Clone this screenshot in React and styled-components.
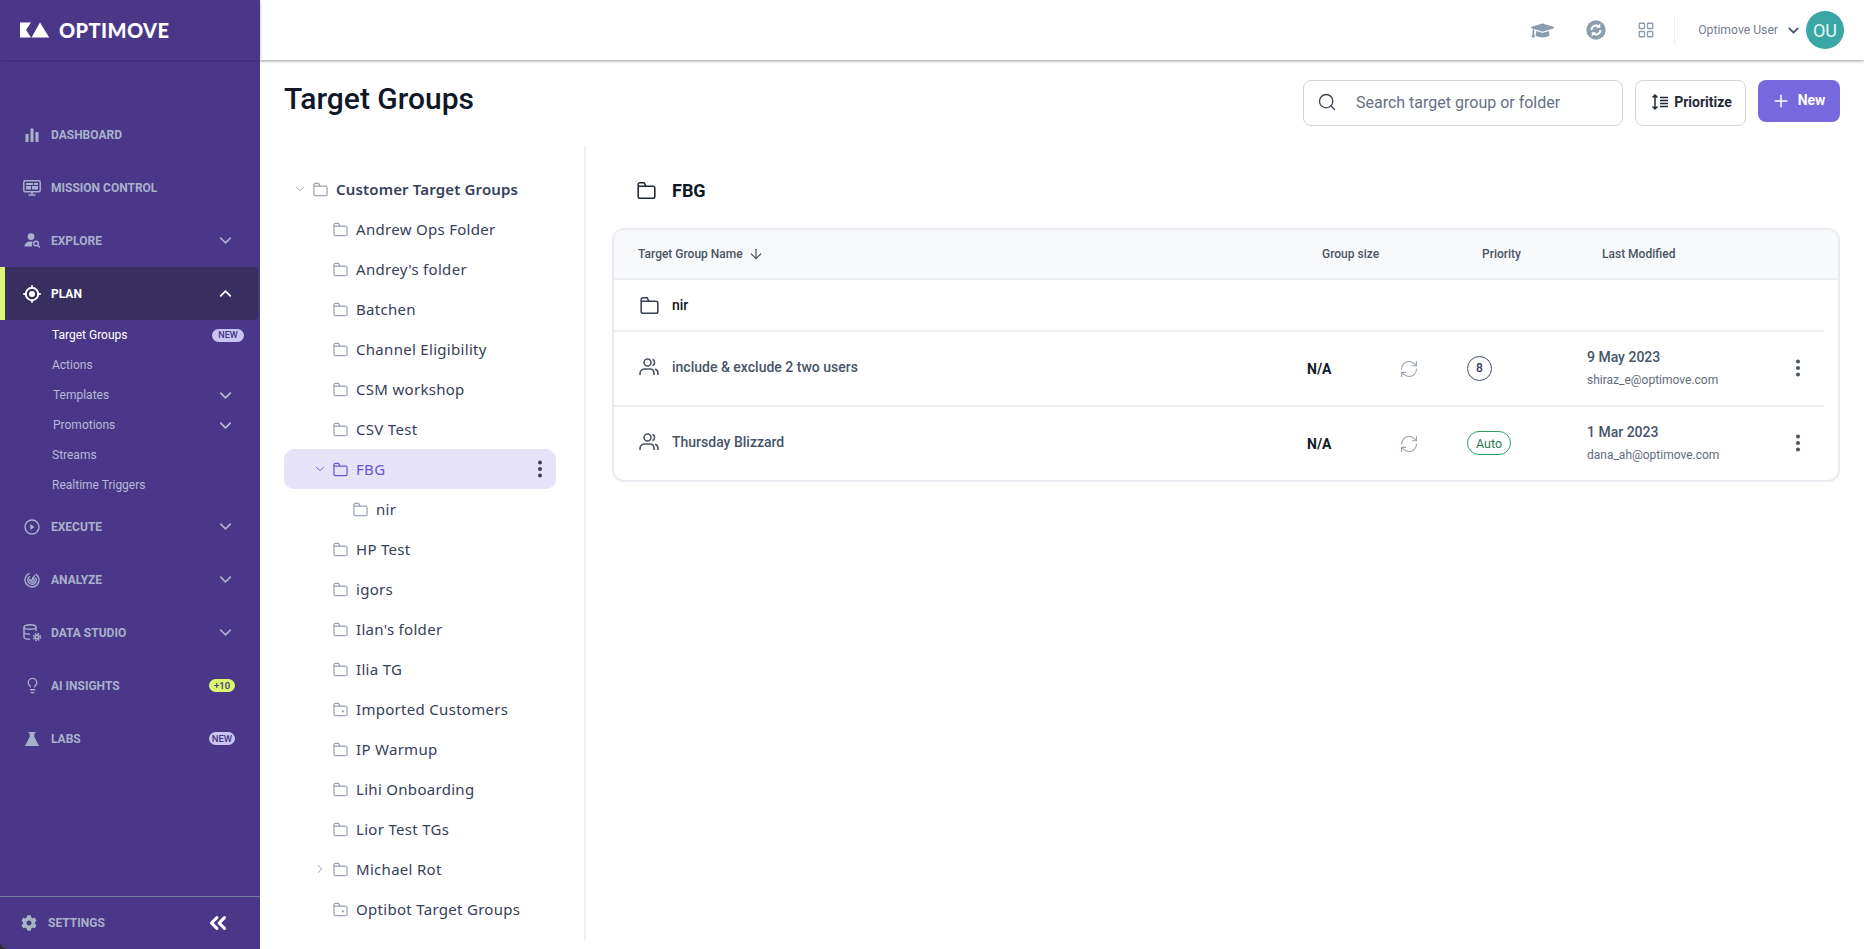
import React from 'react';
import styled, { createGlobalStyle } from 'styled-components';
import { ChevronDown, ChevronUp, ChevronRight, ChevronsLeft, Lightbulb, LayoutGrid, Search, Plus, ArrowDown, RefreshCw } from 'lucide-react';
import { FaCog, FaGraduationCap } from 'react-icons/fa';

const Global = createGlobalStyle`
	html, body { margin: 0; padding: 0; background: #fff; }
	body { font-family: Roboto, "Liberation Sans", sans-serif; }
	* { box-sizing: border-box; }
`;

// sidebar icons, drawn because the packages have nothing close enough
const BarsIcon = () => (
	<svg width="14" height="14" viewBox="0 0 14 14" fill="currentColor">
		<rect x="0.5" y="6" width="3" height="8" />
		<rect x="5.5" y="0.5" width="3" height="13.5" />
		<rect x="10.5" y="4" width="3" height="10" />
	</svg>
);
const MonitorIcon = () => (
	<svg width="18" height="16" viewBox="0 0 18 16" fill="none" stroke="currentColor">
		<rect x="0.75" y="0.75" width="16.5" height="11" rx="1.5" strokeWidth="1.5" />
		<rect x="3" y="3" width="7" height="2" fill="currentColor" stroke="none" />
		<rect x="11" y="3" width="4" height="2" fill="currentColor" stroke="none" />
		<rect x="3" y="6" width="5" height="3.5" fill="currentColor" stroke="none" />
		<rect x="9" y="6" width="6" height="3.5" fill="currentColor" stroke="none" />
		<path d="M9 12v2M5.5 15h7" strokeWidth="1.6" />
	</svg>
);
const ExploreIcon = () => (
	<svg width="17" height="15" viewBox="0 0 17 15" fill="currentColor">
		<circle cx="7" cy="3.6" r="3.4" />
		<path d="M0.5 13.5c0-3 2.5-5 6-5 1 0 1.7.1 2.3.4a4.2 4.2 0 0 0-.6 4.6z" />
		<circle cx="12" cy="10.5" r="2.3" fill="none" stroke="currentColor" strokeWidth="1.4" />
		<path d="M13.7 12.2l2.2 2.2" stroke="currentColor" strokeWidth="1.4" />
	</svg>
);
const TargetIcon = () => (
	<svg width="18" height="18" viewBox="0 0 18 18" fill="none" stroke="currentColor">
		<circle cx="9" cy="9" r="6.2" strokeWidth="2" />
		<circle cx="9" cy="9" r="3" fill="currentColor" stroke="none" />
		<path d="M9 0.3v2.700M9 15v2.700M0.3 9H3M15 9h2.700" strokeWidth="1.800" />
	</svg>
);
const PlayIcon = () => (
	<svg width="16" height="16" viewBox="0 0 16 16" fill="none" stroke="currentColor">
		<circle cx="8" cy="8" r="7" strokeWidth="1.4" />
		<path d="M6.3 5l4.2 3-4.2 3z" fill="currentColor" stroke="none" />
	</svg>
);
const RadarIcon = () => (
	<svg width="16" height="16" viewBox="0 0 16 16" fill="none" stroke="currentColor" strokeWidth="1.4">
		<path d="M5.6 1.4a7 7 0 1 0 6.2.7" />
		<path d="M6 4.4a4.2 4.2 0 1 0 5.4 1.2" />
		<path d="M8 5.8a2.2 2.2 0 1 1-2.2 2.2L8 8l3-5" />
	</svg>
);
const DataIcon = () => (
	<svg width="19" height="18" viewBox="0 0 19 18" fill="none" stroke="currentColor" strokeWidth="1.4">
		<ellipse cx="7" cy="3" rx="6" ry="2.3" />
		<path d="M1 3v10c0 1.3 2.7 2.3 6 2.3M13 3v4M1 8c0 1.3 2.7 2.3 6 2.3" />
		<circle cx="14" cy="13" r="2.6" fill="currentColor" stroke="none" />
		<circle cx="14" cy="13" r="3.4" strokeDasharray="1.5 1.2" strokeWidth="1.6" />
		<circle cx="14" cy="13" r="0.9" fill="#4b3788" stroke="none" />
	</svg>
);
const FlaskIcon = () => (
	<svg width="14" height="14" viewBox="0 0 14 14" fill="currentColor">
		<path d="M3.5 0h7v1.3H9.3v3.4L14 14H0L4.700 4.700V1.300H3.500z" />
	</svg>
);
const LogoMark = () => (
	<svg width="30" height="16" viewBox="0 0 30 16" fill="#fff">
		<path d="M0 .5h11L6 8l5 7.500H0z" />
		<path d="M20 .5L29.200 15.500H11.500z" />
	</svg>
);

// tree and table icons
const FolderIcon = ({ size = 14, star }) => (
	<svg width={size} height={size} viewBox="0 0 16 16" fill="none" stroke="currentColor" strokeWidth="1.300">
		<path d="M1 3.500V13a1.500 1.500 0 0 0 1.500 1.500h11A1.500 1.500 0 0 0 15 13V6a1.500 1.500 0 0 0-1.500-1.500H1" />
		<path d="M1 4V3a1.500 1.500 0 0 1 1.500-1.500H6L7.500 4.500" />
		{star && <circle cx="10.500" cy="10" r="1.200" fill="currentColor" stroke="none" />}
	</svg>
);
const UsersIcon = () => (
	<svg width="20" height="18" viewBox="0 0 20 18" fill="none" stroke="#4a5468" strokeWidth="1.600">
		<circle cx="8.500" cy="4.500" r="3.500" />
		<path d="M13.500 1.300a3.500 3.500 0 0 1 0 6.400" />
		<path d="M1 17v-1.500C1 12.500 3.500 11 6 11h5c2.500 0 4 1.500 4 4.500V17" />
		<path d="M16 11.200c1.800.4 3 1.900 3 4.300V17" />
	</svg>
);
const KebabIcon = ({ color = '#4a5468' }) => (
	<svg width="4" height="18" viewBox="0 0 4 18" fill={color}>
		<circle cx="2" cy="2.500" r="2" />
		<circle cx="2" cy="9" r="2" />
		<circle cx="2" cy="15.500" r="2" />
	</svg>
);
const SyncBadgeIcon = () => (
	<svg width="20" height="20" viewBox="0 0 20 20">
		<circle cx="10" cy="10" r="9.700" fill="#8b9dae" />
		<path d="M5.500 10a4.500 4.500 0 0 1 7.500-3.300M14.500 10a4.500 4.500 0 0 1-7.500 3.300" fill="none" stroke="#fff" strokeWidth="2" />
		<path d="M14.300 3.500v4.300H10zM5.700 16.500v-4.300H10z" fill="#fff" />
	</svg>
);
const SortLinesIcon = () => (
	<svg width="18" height="18" viewBox="0 0 18 18" fill="none" stroke="#1f2937" strokeWidth="1.500">
		<path d="M4 2v14M1.500 4.500L4 2l2.500 2.500M1.500 13.500L4 16l2.500-2.500" />
		<path d="M9 4.500h8M9 7.500h8M9 10.500h8M9 13.500h8" />
	</svg>
);

const navTop = [
	{ label: 'Dashboard', icon: <BarsIcon /> },
	{ label: 'Mission Control', icon: <MonitorIcon /> },
	{ label: 'Explore', icon: <ExploreIcon />, more: true },
];
const subItems = [
	{ label: 'Target Groups', active: true, badge: 'NEW' },
	{ label: 'Actions' },
	{ label: 'Templates', more: true, nudge: 1 },
	{ label: 'Promotions', more: true, nudge: 1 },
	{ label: 'Streams' },
	{ label: 'Realtime Triggers' },
];
const navBottom = [
	{ label: 'Execute', icon: <PlayIcon />, more: true },
	{ label: 'Analyze', icon: <RadarIcon />, more: true },
	{ label: 'Data Studio', icon: <DataIcon />, more: true },
	{ label: 'AI Insights', icon: <Lightbulb size={17} strokeWidth={1.8} />, pill: '+10', lime: true },
	{ label: 'Labs', icon: <FlaskIcon />, pill: 'NEW' },
];
const tree = [
	{ name: 'Customer Target Groups', depth: 0, root: true, open: true },
	{ name: 'Andrew Ops Folder', depth: 1 },
	{ name: "Andrey's folder", depth: 1 },
	{ name: 'Batchen', depth: 1 },
	{ name: 'Channel Eligibility', depth: 1 },
	{ name: 'CSM workshop', depth: 1 },
	{ name: 'CSV Test', depth: 1 },
	{ name: 'FBG', depth: 1, open: true, selected: true },
	{ name: 'nir', depth: 2 },
	{ name: 'HP Test', depth: 1 },
	{ name: 'igors', depth: 1 },
	{ name: "Ilan's folder", depth: 1 },
	{ name: 'Ilia TG', depth: 1 },
	{ name: 'Imported Customers', depth: 1, star: true },
	{ name: 'IP Warmup', depth: 1 },
	{ name: 'Lihi Onboarding', depth: 1 },
	{ name: 'Lior Test TGs', depth: 1 },
	{ name: 'Michael Rot', depth: 1, closed: true },
	{ name: 'Optibot Target Groups', depth: 1, star: true },
];
const groups = [
	{ name: 'include & exclude 2 two users', date: '9 May 2023', by: 'shiraz_e@optimove.com', priority: '8' },
	{ name: 'Thursday Blizzard', date: '1 Mar 2023', by: 'dana_ah@optimove.com', priority: 'Auto' },
];

const App = () => {
	return (
		<Shell>
			<Global />
			<SideRail>
				<Sidebar>
					<Brand>
						<LogoMark />
						<BrandName>OPTIMOVE</BrandName>
					</Brand>
					<Nav>
						{navTop.map((item) => <NavEntry key={item.label} item={item} />)}
						<NavItem $current>
							<NavIcon><TargetIcon /></NavIcon>
							<NavLabel>Plan</NavLabel>
							<NavChevron><ChevronUp size={19} strokeWidth={2.2} /></NavChevron>
						</NavItem>
						<SubList>
							{subItems.map((sub) => (
								<SubItem key={sub.label} $active={sub.active} $nudge={sub.nudge}>
									<span>{sub.label}</span>
									{sub.more && <NavChevron><ChevronDown size={19} strokeWidth={2.2} /></NavChevron>}
									{sub.badge && <SubBadge>{sub.badge}</SubBadge>}
								</SubItem>
							))}
						</SubList>
						{navBottom.map((item) => <NavEntry key={item.label} item={item} />)}
					</Nav>
					<SideFooter>
						<SettingsIcon><FaCog size={16} /></SettingsIcon>
						<SettingsLabel>Settings</SettingsLabel>
						<Collapse><ChevronsLeft size={26} strokeWidth={2.8} /></Collapse>
					</SideFooter>
				</Sidebar>
			</SideRail>
			<Main>
				<TopBar>
					<TopIcon $w={62}><FaGraduationCap size={23} /></TopIcon>
					<TopIcon $w={46}><SyncBadgeIcon /></TopIcon>
					<TopIcon $w={54}><LayoutGrid size={18} strokeWidth={1.8} /></TopIcon>
					<TopDivider />
					<UserName>Optimove User</UserName>
					<UserChevron><ChevronDown size={17} strokeWidth={2.5} /></UserChevron>
					<Avatar>OU</Avatar>
				</TopBar>
				<PageHead>
					<Title>Target Groups</Title>
					<Actions>
						<SearchBox>
							<Search size={20} strokeWidth={1.6} color="#374151" />
							<SearchText>Search target group or folder</SearchText>
						</SearchBox>
						<GhostButton><SortLinesIcon />Prioritize</GhostButton>
						<PrimaryButton><Plus size={20} strokeWidth={1.8} /><NewLabel>New</NewLabel></PrimaryButton>
					</Actions>
				</PageHead>
				<Body>
					<TreePanel>
						{tree.map((row) => (
							<TreeRow key={row.name} $depth={row.depth} $selected={row.selected}>
								<TreeCaret $selected={row.selected}>
									{row.open && <ChevronDown size={14} strokeWidth={1.6} />}
									{row.closed && <ChevronRight size={14} strokeWidth={1.6} />}
								</TreeCaret>
								<TreeFolder $selected={row.selected}><FolderIcon size={15} star={row.star} /></TreeFolder>
								<TreeName $root={row.root}>{row.name}</TreeName>
								{row.selected && <TreeMenu><KebabIcon color="#3b4257" /></TreeMenu>}
							</TreeRow>
						))}
					</TreePanel>
					<Detail>
						<DetailHead>
							<DetailFolder><FolderIcon size={19} /></DetailFolder>
							<DetailTitle>FBG</DetailTitle>
						</DetailHead>
						<Table>
							<HeadRow>
								<HeadName>Target Group Name <ArrowDown size={16} strokeWidth={1.8} /></HeadName>
								<HeadCell>Group size</HeadCell>
								<HeadCell>Priority</HeadCell>
								<HeadCell>Last Modified</HeadCell>
							</HeadRow>
							<FolderRow>
								<RowFolder><FolderIcon size={19} /></RowFolder>
								<FolderName>nir</FolderName>
							</FolderRow>
							{groups.map((group) => (
								<GroupRow key={group.name}>
									<GroupName><UsersIcon /><span>{group.name}</span></GroupName>
									<Size>N/A</Size>
									<Refresh><RefreshCw size={20} strokeWidth={1.3} /></Refresh>
									<PriorityCell>
										{group.priority === 'Auto'
											? <AutoBadge>Auto</AutoBadge>
											: <RankBadge>{group.priority}</RankBadge>}
									</PriorityCell>
									<Modified>
										<ModifiedDate>{group.date}</ModifiedDate>
										<ModifiedBy>{group.by}</ModifiedBy>
									</Modified>
									<RowMenu><KebabIcon /></RowMenu>
								</GroupRow>
							))}
						</Table>
					</Detail>
				</Body>
			</Main>
		</Shell>
	);
};

const NavEntry = ({ item }) => (
	<NavItem>
		<NavIcon>{item.icon}</NavIcon>
		<NavLabel>{item.label}</NavLabel>
		{item.more && <NavChevron><ChevronDown size={19} strokeWidth={2.2} /></NavChevron>}
		{item.pill && <NavPill $lime={item.lime}>{item.pill}</NavPill>}
	</NavItem>
);

const Shell = styled.div`
	display: flex;
	height: 949px;
	overflow: hidden;
`;

const SideRail = styled.div`
	width: 260px;
	flex: none;
	background: #2f2f2f;
	z-index: 2;
`;

const Sidebar = styled.aside`
	height: 100%;
	display: flex;
	flex-direction: column;
	background: #4b3788;
	border-bottom-left-radius: 8px;
`;

const Brand = styled.div`
	height: 60px;
	flex: none;
	display: flex;
	align-items: center;
	gap: 9px;
	padding-left: 20px;
	box-shadow: 0 1px 3px rgba(30, 20, 60, 0.35);
`;

const BrandName = styled.span`
	font-family: Lato, "Open Sans", sans-serif;
	font-weight: 900;
	font-size: 20px;
	letter-spacing: 0.4px;
	color: #fff;
	line-height: 16px;
`;

const Nav = styled.nav`
	padding-top: 48px;
`;

const NavItem = styled.div`
	height: 53px;
	display: flex;
	align-items: center;
	padding-left: ${({ $current }) => ($current ? '16px' : '21px')};
	padding-right: ${({ $current }) => ($current ? '23px' : '25px')};
	margin-right: ${({ $current }) => ($current ? '2px' : '0')};
	color: ${({ $current }) => ($current ? '#fff' : '#a8b1cc')};
	background: ${({ $current }) => ($current ? '#382f60' : 'transparent')};
	border-left: ${({ $current }) => ($current ? '5px solid #dcf76f' : 'none')};
	border-radius: ${({ $current }) => ($current ? '0 4px 4px 0' : '0')};
`;

const NavIcon = styled.span`
	width: 22px;
	display: flex;
	justify-content: center;
	color: inherit;
	margin-right: 8px;
`;

const NavLabel = styled.span`
	font-weight: 700;
	font-size: 12px;
	text-transform: uppercase;
	color: inherit;
`;

const NavChevron = styled.span`
	margin-left: auto;
	display: flex;
	color: #b5bcd4;
	${NavItem} & { color: inherit; }
`;

const NavPill = styled.span`
	margin-left: auto;
	margin-right: 0;
	width: 26px;
	height: 13px;
	border-radius: 7px;
	font-size: 9.5px;
	font-weight: 500;
	line-height: 13px;
	text-align: center;
	color: #45337f;
	background: ${({ $lime }) => ($lime ? '#dcf76f' : '#c9c5f2')};
`;

const SubList = styled.div`
	display: flex;
	flex-direction: column;
`;

const SubItem = styled.div`
	height: 30px;
	display: flex;
	align-items: center;
	padding-left: ${({ $nudge = 0 }) => 52 + $nudge}px;
	padding-right: 25px;
	font-size: 12px;
	font-weight: 400;
	color: ${({ $active }) => ($active ? '#fff' : '#b4bad6')};
`;

const SubBadge = styled.span`
	margin-left: auto;
	margin-right: -9px;
	width: 32px;
	height: 13px;
	border-radius: 7px;
	font-size: 9px;
	font-weight: 500;
	line-height: 13px;
	text-align: center;
	color: #45337f;
	background: #c9c5f2;
`;

const SideFooter = styled.div`
	margin-top: auto;
	height: 53px;
	display: flex;
	align-items: center;
	padding: 0 29px 0 21px;
	border-top: 1px solid #6f7f9c;
`;

const SettingsIcon = styled.span`
	display: flex;
	color: #a8b5c4;
	margin-right: 11px;
`;

const SettingsLabel = styled.span`
	font-weight: 700;
	font-size: 12px;
	text-transform: uppercase;
	color: #a8b1cc;
`;

const Collapse = styled.span`
	margin-left: auto;
	display: flex;
	color: #fff;
`;

const Main = styled.main`
	flex: 1;
	min-width: 0;
	display: flex;
	flex-direction: column;
`;

const TopBar = styled.header`
	height: 60px;
	flex: none;
	display: flex;
	align-items: center;
	justify-content: flex-end;
	padding-right: 20px;
	box-shadow: 0 1px 3px rgba(0, 0, 0, 0.4);
`;

const TopIcon = styled.span`
	width: ${({ $w }) => $w}px;
	display: flex;
	justify-content: center;
	color: #8b9dae;
`;

const TopDivider = styled.span`
	width: 1px;
	height: 28px;
	background: #eceef1;
	margin: 0 23px 0 1px;
`;

const UserName = styled.span`
	font-size: 12.2px;
	color: #76808f;
`;

const UserChevron = styled.span`
	display: flex;
	color: #4a5468;
	margin: 0 4px 0 7px;
`;

const Avatar = styled.span`
	width: 38px;
	height: 38px;
	border-radius: 50%;
	background: #3aa7a5;
	color: #e9f6f6;
	font-size: 18px;
	display: flex;
	align-items: center;
	justify-content: center;
`;

const PageHead = styled.div`
	height: 86px;
	flex: none;
	display: flex;
	justify-content: space-between;
	padding: 20px 24px 0 24px;
`;

const Title = styled.h1`
	margin: 0;
	font-size: 30px;
	font-weight: 500;
	line-height: 38px;
	color: #101828;
`;

const Actions = styled.div`
	display: flex;
	align-items: flex-start;
	gap: 12px;
`;

const SearchBox = styled.div`
	width: 320px;
	height: 46px;
	display: flex;
	align-items: center;
	gap: 19px;
	padding: 0 0 2px 13px;
	border: 1px solid #d0d5dd;
	border-radius: 8px;
`;

const SearchText = styled.span`
	font-size: 16px;
	color: #667085;
`;

const GhostButton = styled.button`
	width: 111px;
	height: 46px;
	display: flex;
	align-items: center;
	justify-content: center;
	gap: 5px;
	background: #fff;
	border: 1px solid #d0d5dd;
	border-radius: 8px;
	font-family: inherit;
	font-size: 14px;
	font-weight: 700;
	color: #1f2937;
	padding: 0 0 2px 2px;
`;

const PrimaryButton = styled.button`
	width: 82px;
	height: 42px;
	display: flex;
	align-items: center;
	justify-content: center;
	gap: 7px;
	background: #7868dd;
	border: none;
	border-radius: 8px;
	color: #fff;
	padding: 0 2px 0 0;
`;

const NewLabel = styled.span`
	font-family: Roboto, sans-serif;
	font-size: 14px;
	font-weight: 700;
	margin-top: -2px;
`;

const Body = styled.div`
	flex: 1;
	min-height: 0;
	display: flex;
	padding-left: 24px;
	padding-bottom: 9px;
`;

const TreePanel = styled.div`
	width: 302px;
	flex: none;
	padding-top: 23px;
	border-right: 2px solid #eef0f3;
`;

const TreeRow = styled.div`
	width: 272px;
	height: 40px;
	display: flex;
	align-items: center;
	padding-left: ${({ $depth }) => 8 + $depth * 20}px;
	padding-right: 14px;
	border-radius: 10px;
	background: ${({ $selected }) => ($selected ? '#e6e3f9' : 'transparent')};
	color: ${({ $selected }) => ($selected ? '#6a55d6' : '#36405a')};
`;

const TreeCaret = styled.span`
	width: 16px;
	height: 16px;
	flex: none;
	display: flex;
	align-items: center;
	justify-content: center;
	margin-right: 5px;
	color: ${({ $selected }) => ($selected ? '#6a55d6' : '#98a1b3')};
`;

const TreeFolder = styled.span`
	display: flex;
	margin-right: 8px;
	color: ${({ $selected }) => ($selected ? '#6a55d6' : '#9ba3b8')};
`;

const TreeName = styled.span`
	font-family: "Noto Sans", sans-serif;
	font-size: 15px;
	letter-spacing: ${({ $root }) => ($root ? '0.15px' : '0.3px')};
	font-weight: ${({ $root }) => ($root ? 600 : 400)};
	white-space: nowrap;
`;

const TreeMenu = styled.span`
	margin-left: auto;
	display: flex;
`;

const Detail = styled.section`
	flex: 1;
	min-width: 0;
	padding: 0 24px 0 26px;
`;

const DetailHead = styled.div`
	height: 82px;
	display: flex;
	align-items: center;
	padding: 6px 0 0 25px;
`;

const DetailFolder = styled.span`
	display: flex;
	color: #1f2937;
	margin-right: 16px;
`;

const DetailTitle = styled.h2`
	margin: 0;
	font-size: 18px;
	font-weight: 700;
	color: #101828;
`;

const Table = styled.div`
	border: 2px solid #e9ebf0;
	border-radius: 12px;
	overflow: hidden;
`;

const HeadRow = styled.div`
	height: 50px;
	display: grid;
	grid-template-columns: 708px 160px 120px 1fr;
	align-items: center;
	background: #f8f9fb;
	border-bottom: 2px solid #eceef2;
`;

const HeadCell = styled.span`
	font-size: 12px;
	font-weight: 500;
	color: #4b5563;
`;

const HeadName = styled(HeadCell)`
	display: flex;
	align-items: center;
	gap: 5px;
	padding-left: 24px;
`;

const FolderRow = styled.div`
	height: 52px;
	display: flex;
	align-items: center;
	padding-left: 26px;
	margin-right: 14px;
	border-bottom: 2px solid #eceef2;
`;

const RowFolder = styled.span`
	display: flex;
	color: #374151;
	margin-right: 13px;
`;

const FolderName = styled.span`
	font-size: 14px;
	font-weight: 500;
	color: #111827;
`;

const GroupRow = styled.div`
	height: 75px;
	display: grid;
	grid-template-columns: 693px 92px 68px 120px 1fr 28px;
	align-items: center;
	margin-right: 14px;
	border-bottom: 2px solid #eceef2;
	&:last-child { border-bottom: none; height: 73px; }
`;

const GroupName = styled.div`
	display: flex;
	align-items: center;
	gap: 13px;
	padding-left: 25px;
	margin-top: -3px;
	font-size: 14px;
	font-weight: 500;
	color: #475467;
`;

const Size = styled.span`
	font-size: 14px;
	font-weight: 700;
	color: #111827;
`;

const Refresh = styled.span`
	display: flex;
	color: #98a2b3;
`;

const PriorityCell = styled.div`
	margin-top: -1px;
`;

const RankBadge = styled.span`
	display: flex;
	align-items: center;
	justify-content: center;
	width: 25px;
	height: 25px;
	border: 1px solid #475467;
	border-radius: 50%;
	font-size: 12px;
	font-weight: 500;
	color: #344054;
`;

const AutoBadge = styled.span`
	display: inline-flex;
	align-items: center;
	justify-content: center;
	width: 44px;
	height: 24px;
	border: 1px solid #2e9c63;
	border-radius: 12px;
	font-size: 12.5px;
	font-weight: 400;
	color: #1d7a4b;
`;

const Modified = styled.div`
	display: flex;
	flex-direction: column;
	gap: 6px;
	margin-top: -1px;
`;

const ModifiedDate = styled.span`
	font-size: 14px;
	font-weight: 500;
	line-height: 17px;
	color: #475467;
`;

const ModifiedBy = styled.span`
	font-size: 12px;
	line-height: 16px;
	color: #5f6b7d;
`;

const RowMenu = styled.span`
	display: flex;
	margin-top: -1px;
`;

export default App;
